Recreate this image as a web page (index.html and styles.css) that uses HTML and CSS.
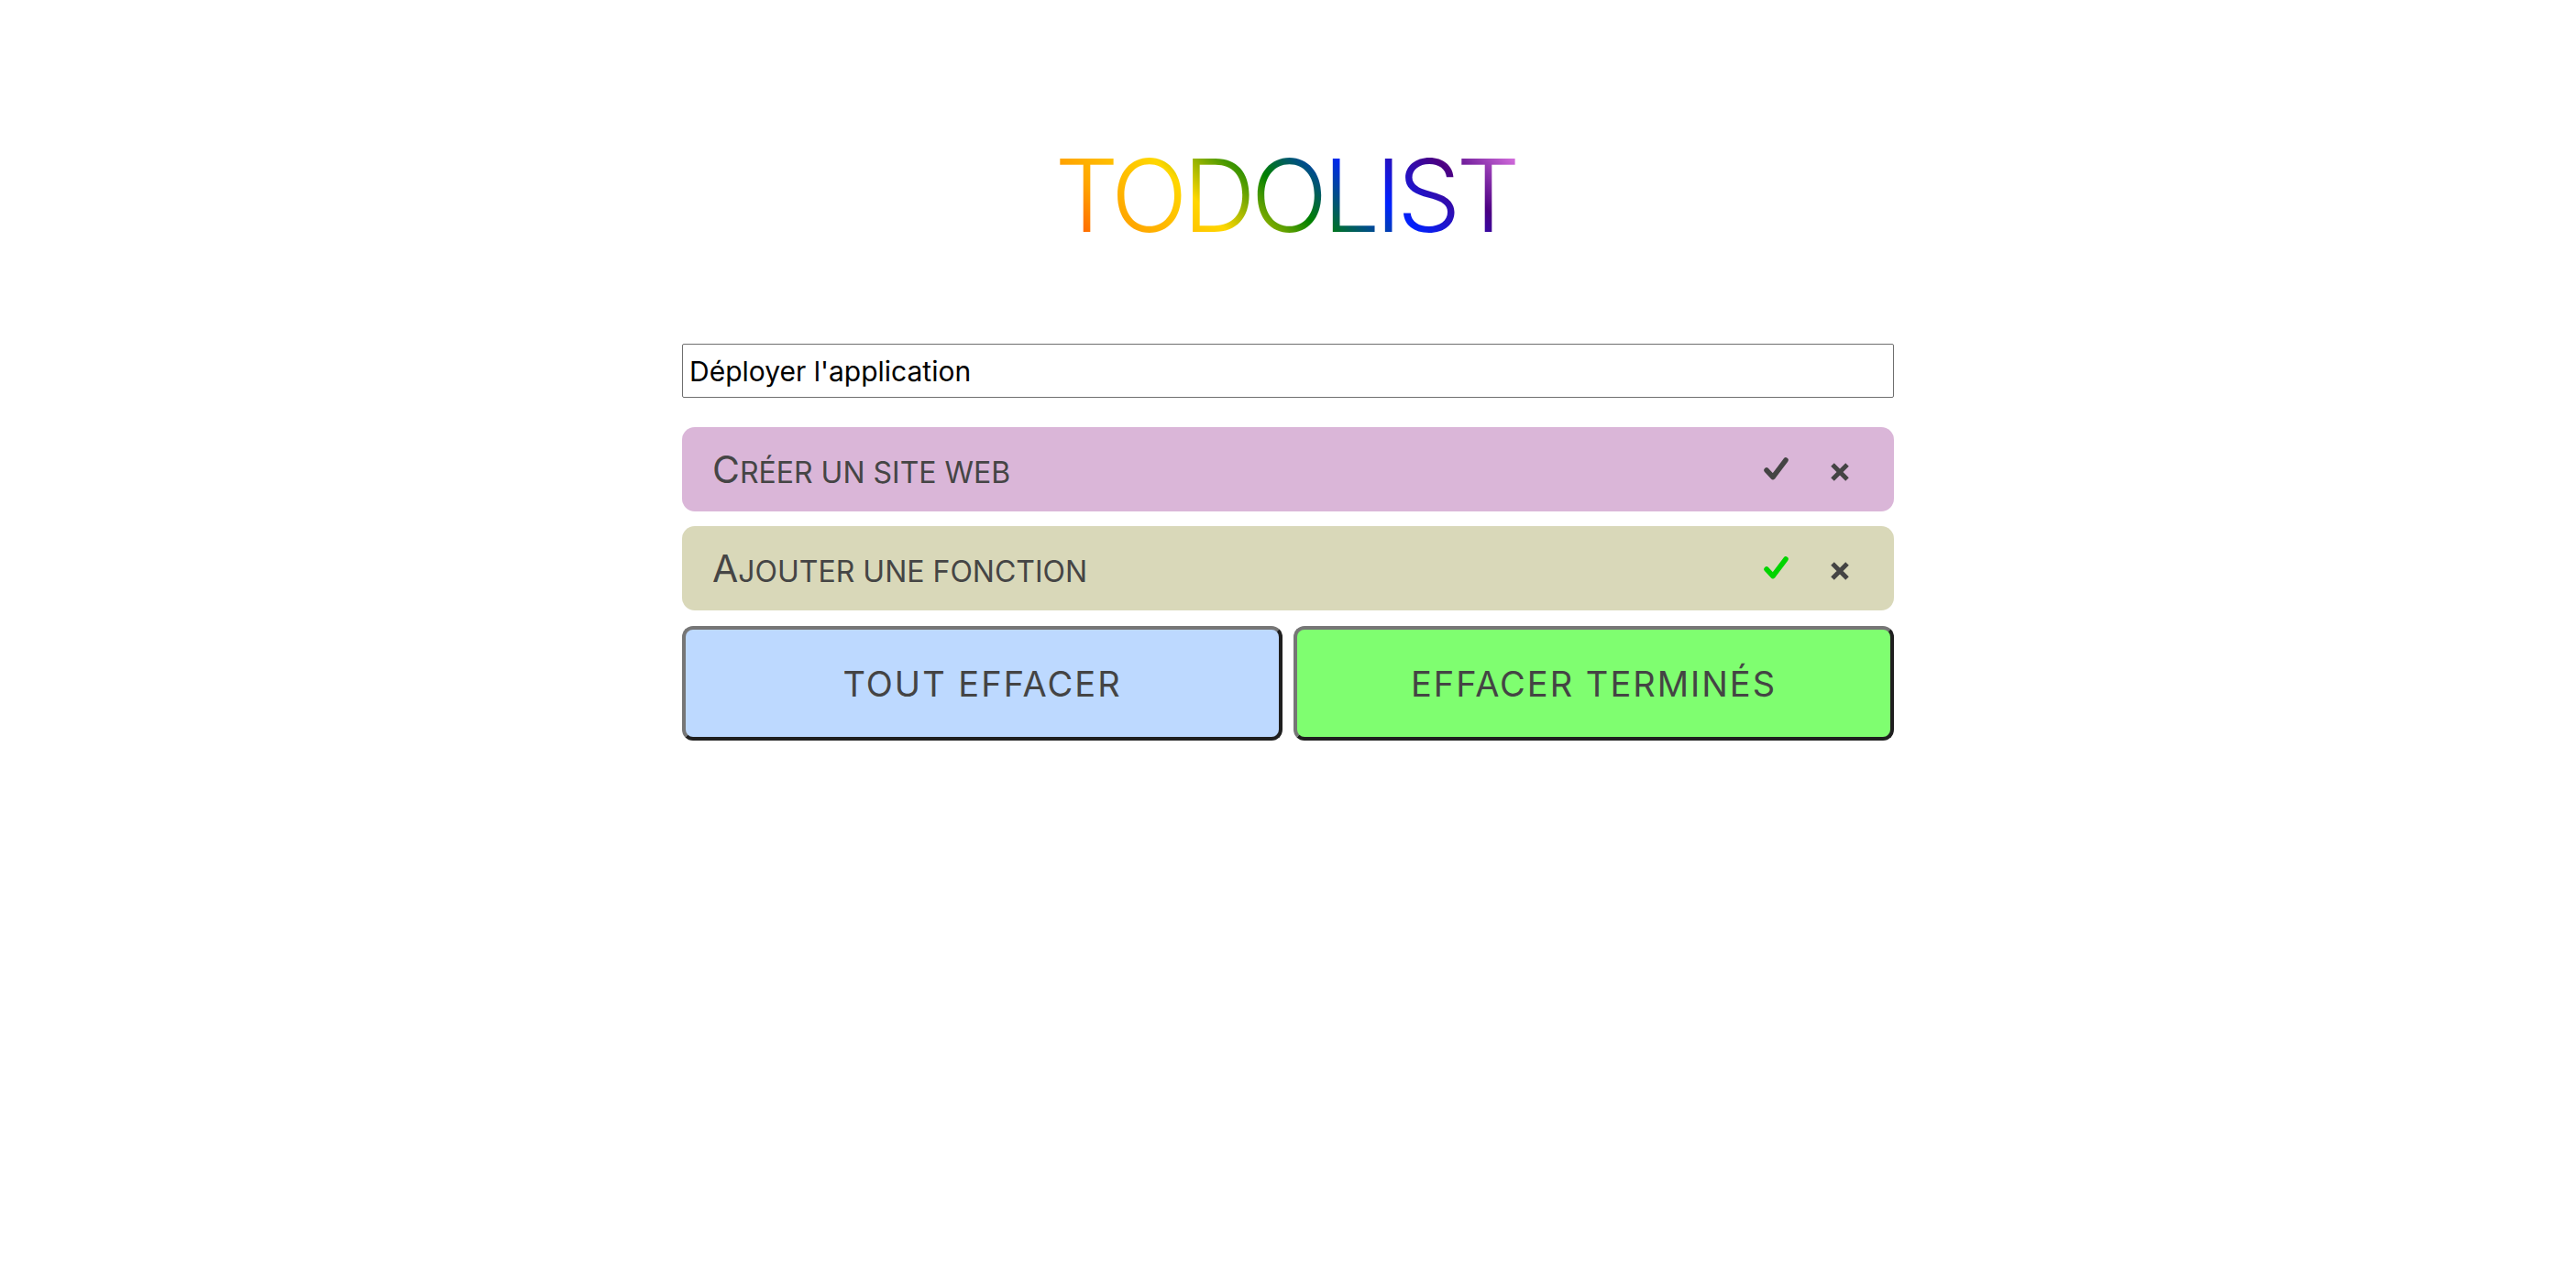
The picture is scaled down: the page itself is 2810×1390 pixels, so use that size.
FILE: index.html
```html
<!DOCTYPE html>
<html lang="fr">
<head>
<meta charset="utf-8">
<title>TODOLIST</title>
<link rel="stylesheet" href="styles.css">
</head>
<body>
<main class="app">
  <h1 class="title"><span class="title-text">TODOLIST</span></h1>
  <input class="new-task" type="text" value="Déployer l'application">
  <ul class="tasks">
    <li class="task task-pink">
      <span class="task-label">Créer un site web</span>
      <div class="task-actions">
        <button class="icon-btn check" aria-label="Terminer">
          <svg viewBox="0 0 30 30" width="30" height="30"><path d="M5 16 L12 23.5 L26 5" fill="none" stroke="currentColor" stroke-width="5.5" stroke-linecap="round" stroke-linejoin="round"/></svg>
        </button>
        <button class="icon-btn remove" aria-label="Supprimer">
          <svg viewBox="0 0 22 22" width="22" height="22"><path d="M3 3 L19 19 M19 3 L3 19" fill="none" stroke="currentColor" stroke-width="5"/></svg>
        </button>
      </div>
    </li>
    <li class="task task-khaki">
      <span class="task-label">Ajouter une fonction</span>
      <div class="task-actions">
        <button class="icon-btn check check-done" aria-label="Terminé">
          <svg viewBox="0 0 30 30" width="30" height="30"><path d="M5 16 L12 23.5 L26 5" fill="none" stroke="currentColor" stroke-width="5.5" stroke-linecap="round" stroke-linejoin="round"/></svg>
        </button>
        <button class="icon-btn remove" aria-label="Supprimer">
          <svg viewBox="0 0 22 22" width="22" height="22"><path d="M3 3 L19 19 M19 3 L3 19" fill="none" stroke="currentColor" stroke-width="5"/></svg>
        </button>
      </div>
    </li>
  </ul>
  <div class="controls">
    <button class="ctrl ctrl-all">Tout effacer</button>
    <button class="ctrl ctrl-done">Effacer terminés</button>
  </div>
</main>
</body>
</html>
```
FILE: styles.css
```css
html, body {
  margin: 0;
  padding: 0;
  background: #ffffff;
}

body {
  font-family: "Inter", "Liberation Sans", sans-serif;
}

.app {
  width: 1322px;
  margin: 0 auto;
  padding-top: 158px;
}

.title {
  margin: 0 0 107px;
  text-align: center;
  font-size: 110px;
  font-weight: 300;
  line-height: 110px;
}

.title-text {
  display: inline-block;
  letter-spacing: -5px;
  margin-right: 6px;
  background: linear-gradient(45deg, #ff3c00 0%, #ffa500 16.7%, #ffd700 33.3%, #008000 50%, #0022ff 66.7%, #4b0082 83.3%, #ee82ee 100%);
  -webkit-background-clip: text;
  background-clip: text;
  color: transparent;
}

.new-task {
  display: block;
  box-sizing: border-box;
  width: 100%;
  height: 59px;
  margin: 0 0 32px;
  padding: 0 7px;
  border: 1px solid #6f6f6f;
  border-radius: 2px;
  font-family: "Inter", "Liberation Sans", sans-serif;
  font-size: 30px;
  color: #000;
  background: #fff;
}

.tasks {
  list-style: none;
  margin: 0;
  padding: 0;
  display: flex;
  flex-direction: column;
  gap: 16px;
}

.task {
  display: flex;
  align-items: center;
  height: 92px;
  box-sizing: border-box;
  padding: 0 48px 0 33px;
  border-radius: 14px;
  color: #454545;
}

.task-label {
  font-size: 32px;
  text-transform: uppercase;
}

.task-label::first-letter {
  font-size: 41px;
}

.task-pink { background: #dab6d8; }
.task-khaki { background: #d9d8b9; }

.task-actions {
  margin-left: auto;
  display: flex;
  align-items: center;
  gap: 44px;
}

.icon-btn {
  display: flex;
  padding: 0;
  border: none;
  background: none;
  color: #444;
}

.check-done { color: #00d400; }

.remove { margin-top: 6px; }

.controls {
  margin-top: 17px;
  display: grid;
  grid-template-columns: 1fr 1fr;
  gap: 12px;
}

.ctrl {
  height: 125px;
  box-sizing: border-box;
  border-style: solid;
  border-width: 4px;
  border-color: #767676 #1f1f1f #1f1f1f #767676;
  border-radius: 12px;
  font-family: "Inter", "Liberation Sans", sans-serif;
  font-size: 38px;
  letter-spacing: 2px;
  text-transform: uppercase;
  color: #444;
}

.ctrl-all { background: #bdd9ff; }
.ctrl-done { background: #7ffe70; }
```
